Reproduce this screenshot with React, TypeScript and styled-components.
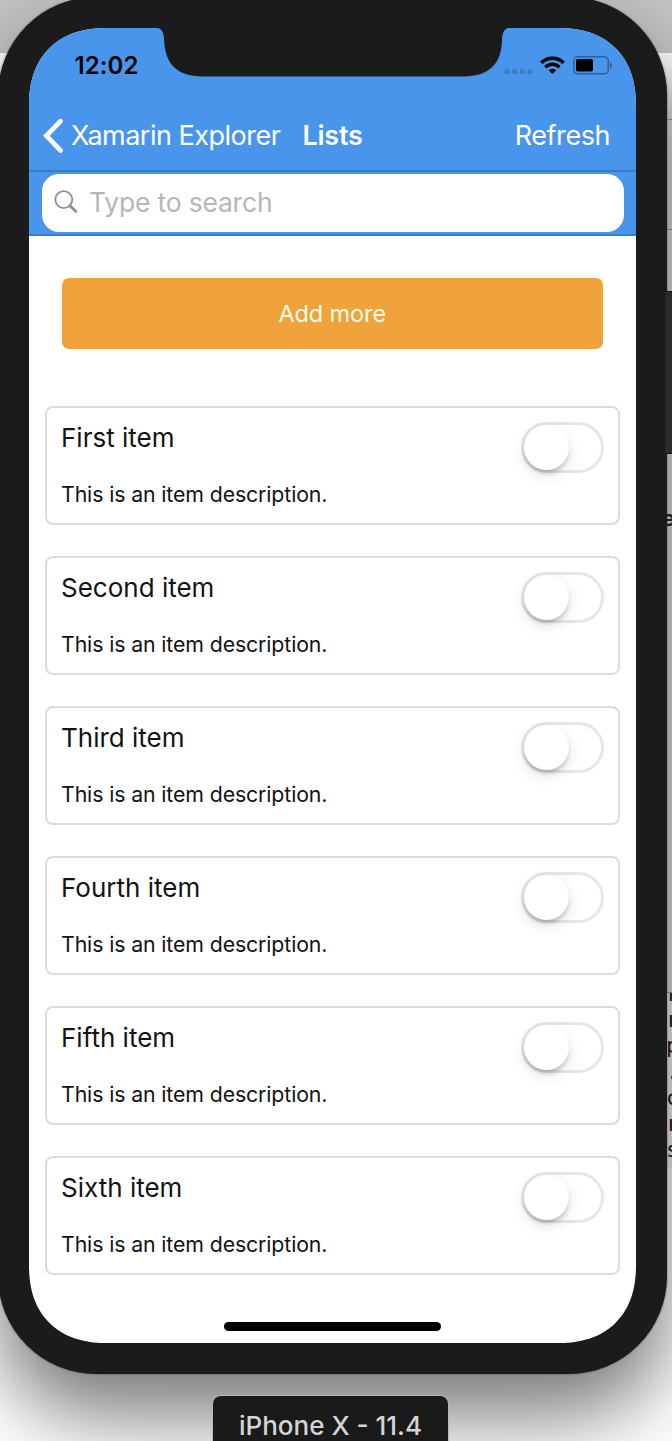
import React from "react";
import styled, { createGlobalStyle } from "styled-components";

const Global = createGlobalStyle`
  * { box-sizing: border-box; }
  html, body { margin: 0; padding: 0; }
  body { font-family: Inter, "Liberation Sans", sans-serif; overflow: hidden; }
`;

const Desktop = styled.div`
  position: relative;
  width: 672px;
  height: 1441px;
  overflow: hidden;
  background: #fff;
`;

const DesktopBar = styled.div`
  height: 53px;
  background: #c3c3c3;
`;

const WindowEdge = styled.div`
  margin-left: 664px;
  display: flex;
  flex-direction: column;
`;

const EdgePane = styled.div<{ $h: number; $bg: string; $line?: string }>`
  height: ${(p) => p.$h}px;
  background: ${(p) => p.$bg};
  border-bottom: ${(p) => (p.$line ? `1px solid ${p.$line}` : "none")};
`;

const CodeEdge = styled(EdgePane)`
  overflow: hidden;
  padding-left: 2px;
  font-family: "DejaVu Sans Mono", monospace;
  font-size: 22px;
  line-height: 26px;
  color: #2a211c;
  white-space: nowrap;

  & > div:first-child {
    margin-top: -12px;
  }
`;

const EdgeWord = styled(EdgePane)`
  padding-top: 51px;
  margin-left: -6px;
  padding-left: 4px;
  font-size: 22px;
  line-height: 26px;
  font-weight: 600;
  color: #1b2a3a;
`;

const Phone = styled.div`
  position: absolute;
  left: -2px;
  top: -3px;
  width: 668.5px;
  height: 1377px;
  padding: 31px;
  background: #1b1b1b;
  border-radius: 98px;
  box-shadow: 0 0 2px rgba(0, 0, 0, 0.5), 0 42px 80px rgba(0, 0, 0, 0.53);
`;

const Screen = styled.div`
  width: 607px;
  height: 1315px;
  overflow: hidden;
  display: flex;
  flex-direction: column;
  background: #fff;
  border-radius: 71px;

  @supports (corner-shape: superellipse(1.2)) {
    border-radius: 78px;
    corner-shape: superellipse(1.2);
  }
`;

const Notch = styled.svg`
  position: absolute;
  left: 2px;
  top: 3px;
`;

const SideButton = styled.div`
  position: absolute;
  left: 665px;
  top: 291px;
  width: 8px;
  height: 163px;
  background: #2b2b2b;
  border-top: 1px solid #141414;
  border-bottom: 1px solid #141414;
`;

const StatusBar = styled.div`
  flex: none;
  height: 72px;
  padding: 21px 24px 0 45.5px;
  display: flex;
  justify-content: space-between;
  background: #4895eb;
`;

const Clock = styled.span`
  padding-top: 1px;
  font-size: 24px;
  line-height: 32px;
  font-weight: 600;
  letter-spacing: 0.1px;
  color: #000;
`;

const NavBar = styled.div`
  flex: none;
  height: 72px;
  padding: 2px 26px 0 14px;
  display: flex;
  align-items: center;
  background: #4895eb;
  border-bottom: 2px solid #3c7bc2;
  color: #fff;
  font-size: 27px;
  line-height: 34px;
  white-space: nowrap;
`;

const BackLabel = styled.span`
  margin-left: 7px;
  width: 231.5px;
  letter-spacing: -0.5px;
`;

const NavTitle = styled.span`
  flex: 1;
  font-weight: 600;
  letter-spacing: -0.25px;
`;

const NavAction = styled.span`
  letter-spacing: -0.45px;
`;

const SearchBar = styled.div`
  flex: none;
  height: 64px;
  padding: 2px 12.5px 0;
  background: #4895eb;
  border-bottom: 2px solid #3c7bc2;
`;

const SearchField = styled.div`
  height: 58px;
  padding: 0 0 2px 12.5px;
  display: flex;
  align-items: center;
  gap: 11px;
  background: #fff;
  border-radius: 17px;
  font-size: 26.5px;
  line-height: 34px;
  letter-spacing: -0.2px;
  color: #b6b6b8;
`;

const Content = styled.div`
  flex: 1;
  padding: 41.5px 16px 0;
  display: flex;
  flex-direction: column;
`;

const AddButton = styled.button`
  flex: none;
  height: 71px;
  margin: 0 17px 57px 16.5px;
  border: 0;
  border-radius: 7px;
  background: #f0a33b;
  color: #fffbe9;
  font-family: inherit;
  font-size: 23.5px;
  letter-spacing: -0.1px;
`;

const List = styled.div`
  display: flex;
  flex-direction: column;
  gap: 31px;
`;

const Card = styled.div`
  height: 119px;
  padding: 14px 14.5px 0 14px;
  display: flex;
  justify-content: space-between;
  border: 2px solid #dcdcdc;
  border-radius: 8px;
  color: #131313;
`;

const ItemTitle = styled.div`
  font-size: 26px;
  line-height: 32px;
  margin-bottom: 27px;
`;

const ItemText = styled.div`
  font-size: 21.3px;
  line-height: 26px;
  letter-spacing: -0.12px;
`;

const Toggle = styled.div`
  width: 83px;
  height: 51px;
  border: 3px solid #e6e6e6;
  border-radius: 26px;
`;

const Knob = styled.div`
  width: 45px;
  height: 45px;
  border-radius: 50%;
  background: #fff;
  box-shadow: 0 4px 4px -1px rgba(0, 0, 0, 0.2), 0 5px 15px rgba(0, 0, 0, 0.12);
`;

const HomeBar = styled.div`
  flex: none;
  width: 217px;
  height: 9px;
  margin: 0 auto 12.5px;
  border-radius: 5px;
  background: #000;
`;

const DeviceLabel = styled.div`
  position: absolute;
  left: 213px;
  top: 1396px;
  width: 235px;
  height: 60px;
  padding-top: 13px;
  border-radius: 8px;
  background: #1a1a1a;
  box-shadow: 0 0 0 1px #b5b8b6;
  text-align: center;
  font-size: 26px;
  line-height: 34px;
  font-weight: 500;
  color: #d4d4d4;
`;

const items = ["First", "Second", "Third", "Fourth", "Fifth", "Sixth"];
const codeLetters = ["r", "r", "p", ".", "c", "r", "s"];

const StatusIcons = () => (
  <svg width="110" height="22" viewBox="502 54 110 22" style={{ marginTop: 5 }}>
    <g fill="#3f7cc4">
      {[504.5, 512.2, 519.9, 527.4].map((x) => (
        <rect key={x} x={x} y="69" width="5" height="5" rx="1.5" />
      ))}
    </g>
    <g fill="none" stroke="#000" strokeWidth="3.5">
      <path d="M541.3 62.8a15.7 15.7 0 0 1 22.3 0" />
      <path d="M545.4 67.2a9.8 9.8 0 0 1 14.1 0" />
    </g>
    <path d="M548.6 70.3a5.6 5.6 0 0 1 7.7 0L552.45 74z" fill="#000" />
    <rect x="573.8" y="56.8" width="34.5" height="17" rx="4" fill="none" stroke="#306196" strokeWidth="1.5" />
    <rect x="576" y="59" width="17" height="12.5" rx="1.8" fill="#000" />
    <path d="M610 62c2.6.8 2.6 6 0 6.8z" fill="#306196" />
  </svg>
);

export default function App() {
  return (
    <Desktop>
      <Global />
      <DesktopBar />
      <WindowEdge>
        <EdgePane $h={67} $bg="linear-gradient(#fff, #d8d8d8)" $line="#999" />
        <EdgePane $h={110} $bg="#dcdcde" $line="#999" />
        <EdgePane $h={224} $bg="#e2e2e4" />
        <EdgeWord $h={100} $bg="#e2e2e4">e</EdgeWord>
        <EdgePane $h={439} $bg="#e2e2e4" $line="#999" />
        <CodeEdge $h={174} $bg="#f4f4f4">
          {codeLetters.map((c, i) => (
            <div key={i}>{c}</div>
          ))}
        </CodeEdge>
      </WindowEdge>
      <Phone>
        <Screen>
          <StatusBar>
            <Clock>12:02</Clock>
            <StatusIcons />
          </StatusBar>
          <NavBar>
            <svg width="21" height="36" viewBox="0 0 21 36" fill="none" stroke="#fff" strokeWidth="4.8" strokeLinecap="round" strokeLinejoin="miter">
              <path d="M17.5 3.2L3.4 17.800l14.100 14.600" />
            </svg>
            <BackLabel>Xamarin Explorer</BackLabel>
            <NavTitle>Lists</NavTitle>
            <NavAction>Refresh</NavAction>
          </NavBar>
          <SearchBar>
            <SearchField>
              <svg width="24" height="24" viewBox="0 0 24 24" fill="none" stroke="#8e8e93">
                <circle cx="9.8" cy="9.6" r="8.5" strokeWidth="1.8" />
                <path d="M16 15.8l6.6 6.4" strokeWidth="2.7" />
              </svg>
              Type to search
            </SearchField>
          </SearchBar>
          <Content>
            <AddButton>Add more</AddButton>
            <List>
              {items.map((name) => (
                <Card key={name}>
                  <div>
                    <ItemTitle>{name} item</ItemTitle>
                    <ItemText>This is an item description.</ItemText>
                  </div>
                  <Toggle>
                    <Knob />
                  </Toggle>
                </Card>
              ))}
            </List>
          </Content>
          <HomeBar />
        </Screen>
        <Notch width="672" height="90" viewBox="0 0 672 90">
          <path
            d="M154 27C161 28 163.5 31 164 38C164.500 62 175 76.500 203 76.500H463C491 76.500 501.500 62 502 40C502.200 31 505 28 512 27Z"
            fill="#1b1b1b"
          />
        </Notch>
      </Phone>
      <SideButton />
      <DeviceLabel>iPhone X - 11.4</DeviceLabel>
    </Desktop>
  );
}
